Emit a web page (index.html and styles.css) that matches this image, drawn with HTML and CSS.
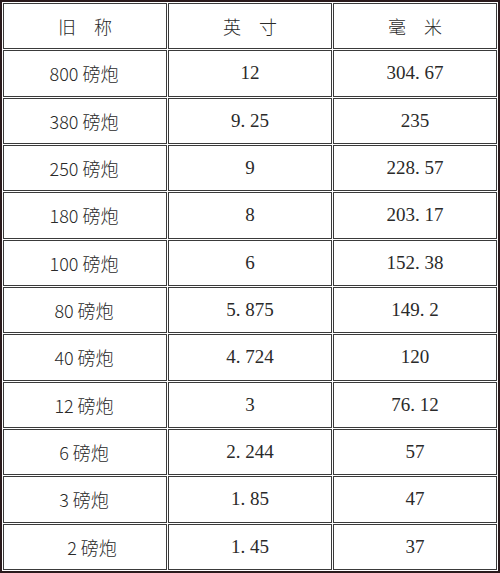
FILE: index.html
```html
<!DOCTYPE html>
<html>
<head>
<meta charset="utf-8">
<link rel="stylesheet" href="styles.css">
</head>
<body>
<table class="grid">
  <tr class="head"><td>旧　称</td><td>英　寸</td><td>毫　米</td></tr>
  <tr><td class="name">800 磅炮</td><td class="num">12</td><td class="num">304. 67</td></tr>
  <tr><td class="name">380 磅炮</td><td class="num">9. 25</td><td class="num">235</td></tr>
  <tr><td class="name">250 磅炮</td><td class="num">9</td><td class="num">228. 57</td></tr>
  <tr><td class="name">180 磅炮</td><td class="num">8</td><td class="num">203. 17</td></tr>
  <tr><td class="name">100 磅炮</td><td class="num">6</td><td class="num">152. 38</td></tr>
  <tr><td class="name">80 磅炮</td><td class="num">5. 875</td><td class="num">149. 2</td></tr>
  <tr><td class="name">40 磅炮</td><td class="num">4. 724</td><td class="num">120</td></tr>
  <tr><td class="name">12 磅炮</td><td class="num">3</td><td class="num">76. 12</td></tr>
  <tr><td class="name">6 磅炮</td><td class="num">2. 244</td><td class="num">57</td></tr>
  <tr><td class="name">3 磅炮</td><td class="num">1. 85</td><td class="num">47</td></tr>
  <tr><td class="name shift">2 磅炮</td><td class="num">1. 45</td><td class="num">37</td></tr>
</table>
</body>
</html>
```
FILE: styles.css
```css
html, body {
  margin: 0;
  padding: 0;
  background: #ffffff;
}
.grid {
  width: 500px;
  height: 573px;
  border: 2px solid #2a1a1c;
  border-collapse: separate;
  border-spacing: 1px;
  table-layout: fixed;
  color: #2a2a2a;
  font-size: 18px;
}
.grid td {
  border: 1px solid #3a3a3a;
  padding: 0;
  text-align: center;
  vertical-align: middle;
  font-family: "Liberation Serif", "Noto Sans CJK SC", serif;
}
.grid .head td {
  font-family: "Noto Sans CJK SC", sans-serif;
  font-weight: 300;
}
.grid td.name {
  font-family: "Noto Sans CJK SC", sans-serif;
  font-weight: 300;
  padding-right: 2px;
}
.grid td.num {
  font-size: 19px;
}
.grid td.shift {
  padding-left: 16px;
}
```
